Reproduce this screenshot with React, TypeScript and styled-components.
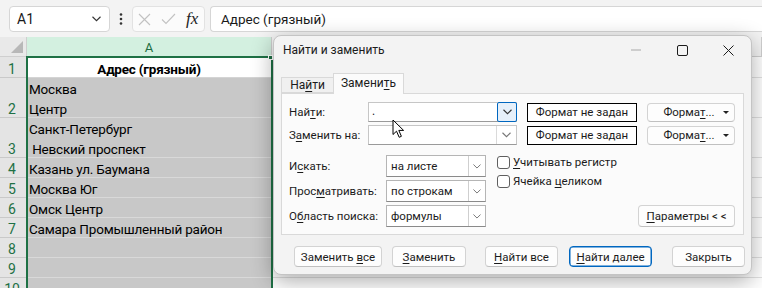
import React from 'react';
import styled, { createGlobalStyle } from 'styled-components';

const Global = createGlobalStyle`
  html, body { margin: 0; padding: 0; background: #fff; overflow: hidden; }
  body { font-family: Roboto, "Noto Sans", sans-serif; }
  * { box-sizing: border-box; }
`;

const UI = `Roboto, "Noto Sans", sans-serif`;
const CELL = `Roboto, "Noto Sans", sans-serif`;

const Page = styled.div`
  position: relative;
  width: 762px;
  height: 288px;
  overflow: hidden;
  background: #fff;
`;

/* ---------- top formula bar ---------- */
const TopBar = styled.div`
  height: 37px;
  background: #f3f3f3;
  display: flex;
  align-items: flex-start;
  padding: 6px 0 0 9px;
`;

const NameBox = styled.div`
  width: 101px;
  height: 26px;
  background: #fff;
  border: 1px solid #d6d6d6;
  border-radius: 4px;
  display: flex;
  align-items: center;
  justify-content: space-between;
  padding: 0 8px 0 7px;
  font: 14px ${UI};
  color: #1a1a1a;
`;

const Dots = styled.div`
  width: 22px;
  height: 26px;
  display: flex;
  align-items: center;
  justify-content: center;
`;

const FxBox = styled.div`
  width: 73px;
  height: 26px;
  background: #fbfbfb;
  border: 1px solid #e2e2e2;
  border-radius: 4px;
  display: flex;
  align-items: center;
  padding: 0 4px 0 5px;
  gap: 10px;
`;

const FxText = styled.span`
  font: italic 17px "Liberation Serif", "DejaVu Serif", serif;
  color: #222;
  line-height: 1;
  margin-top: -2px;
`;

const FormulaInput = styled.div`
  flex: 1;
  height: 26px;
  margin-left: 5px;
  background: #fff;
  border: 1px solid #d6d6d6;
  border-right: none;
  border-radius: 4px 0 0 4px;
  display: flex;
  align-items: center;
  padding-left: 10px;
  font: 13.5px ${UI};
  color: #1a1a1a;
`;

/* ---------- sheet ---------- */
const Sheet = styled.div`
  display: flex;
  flex-direction: column;
`;

const Row = styled.div<{ $h: number }>`
  display: flex;
  height: ${p => p.$h}px;
  flex-shrink: 0;
`;

const Corner = styled.div`
  width: 27px;
  background: #e9e9e9;
  border-right: 1px solid #cfcfcf;
  border-bottom: 1px solid #cfcfcf;
  position: relative;
`;

const CornerTri = styled.div`
  position: absolute;
  right: 3px;
  bottom: 3px;
  width: 0;
  height: 0;
  border-left: 12px solid transparent;
  border-bottom: 12px solid #b8b8b8;
`;

const ColHead = styled.div<{ $active?: boolean }>`
  flex: ${p => (p.$active ? '0 0 245px' : '1')};
  background: ${p => (p.$active ? '#d3f0e0' : '#f3f3f3')};
  color: ${p => (p.$active ? '#1e6e42' : '#444')};
  border-right: 1px solid #cfcfcf;
  border-bottom: 1px solid #cfcfcf;
  display: flex;
  align-items: center;
  justify-content: center;
  padding-top: 2px;
  font: 13px ${UI};
`;

const RowHead = styled.div`
  width: 27px;
  flex: 0 0 27px;
  background: #e4e4e4;
  border-right: 1px solid #c9c9c9;
  border-bottom: 1px solid #c9c9c9;
  color: #1e7145;
  font: 14px ${UI};
  display: flex;
  align-items: flex-end;
  justify-content: center;
  line-height: 19px;
  padding-right: 2px;
`;

const RowNum = styled.span`
  position: relative;
  top: 2px;
`;

const CellA = styled.div<{ $white?: boolean; $bold?: boolean }>`
  flex: 0 0 245px;
  background: ${p => (p.$white ? '#fff' : '#c8c8c8')};
  border-bottom: 1px solid ${p => (p.$white ? '#d4d4d4' : '#d9d9d9')};
  border-right: 1px solid #d9d9d9;
  font: ${p => (p.$bold ? 'bold' : 'normal')} 13.5px ${CELL};
  letter-spacing: -0.2px;
  color: #000;
  line-height: 20px;
  white-space: pre-wrap;
  padding-left: ${p => (p.$bold ? '0' : '2px')};
  text-align: ${p => (p.$bold ? 'center' : 'left')};
  display: flex;
  flex-direction: column;
  justify-content: flex-end;
  overflow: hidden;
`;

const CellText = styled.span`
  position: relative;
  top: 2px;
`;

const CellRest = styled.div`
  flex: 1;
  background: #fff;
  border-bottom: 1px solid #e1e1e1;
`;

const Selection = styled.div`
  position: absolute;
  left: 26px;
  top: 56px;
  width: 247px;
  height: 260px;
  border: 2px solid #1e7145;
  pointer-events: none;
`;

const SelHandle = styled.div`
  position: absolute;
  left: 268px;
  top: 55px;
  width: 5px;
  height: 5px;
  background: #1e7145;
  border: 1px solid #fff;
`;

/* ---------- dialog ---------- */
const Dialog = styled.div`
  position: absolute;
  left: 273px;
  top: 35px;
  width: 479px;
  height: 240px;
  background: #f3f3f3;
  border: 1px solid #c4c4c4;
  border-radius: 8px;
  box-shadow: 0 6px 22px rgba(0, 0, 0, 0.33);
  display: flex;
  flex-direction: column;
  font: 11.5px ${UI};
  color: #1b1b1b;
`;

const TitleBar = styled.div`
  height: 28px;
  display: flex;
  align-items: center;
  padding-left: 9px;
`;

const TitleText = styled.div`
  flex: 1;
  font-size: 12px;
`;

const WinBtn = styled.div`
  width: 46px;
  height: 28px;
  display: flex;
  align-items: center;
  justify-content: center;
`;

const Tabs = styled.div`
  display: flex;
  align-items: flex-end;
  margin: 9px 0 0 7px;
  height: 20px;
`;

const Tab = styled.div<{ $active?: boolean }>`
  height: ${p => (p.$active ? '21px' : '16px')};
  width: ${p => (p.$active ? '71px' : '52px')};
  background: ${p => (p.$active ? '#fbfbfb' : '#f0f0f0')};
  border: 1px solid #d9d9d9;
  border-bottom: ${p => (p.$active ? 'none' : '1px solid #d9d9d9')};
  border-right: ${p => (p.$active ? '1px solid #d9d9d9' : 'none')};
  margin-bottom: ${p => (p.$active ? '-1px' : '0')};
  position: relative;
  z-index: ${p => (p.$active ? 1 : 0)};
  display: flex;
  align-items: center;
  justify-content: center;
  padding-bottom: ${p => (p.$active ? '2px' : '0')};
  font-size: 12px;
`;

const Panel = styled.div`
  margin-left: 7px;
  width: 463px;
  height: 142px;
  background: #fbfbfb;
  border: 1px solid #d9d9d9;
  display: flex;
  flex-direction: column;
  padding: 8px 8px 0 7px;
`;

const FieldRow = styled.div`
  display: flex;
  align-items: center;
  height: 20px;
  & + & { margin-top: 3px; }
`;

const Label = styled.div<{ $w: number }>`
  width: ${p => p.$w}px;
  flex: 0 0 ${p => p.$w}px;
  white-space: nowrap;
`;

const Combo = styled.div`
  width: 149px;
  height: 20px;
  background: #fff;
  border: 1px solid #c6c6c6;
  border-bottom-color: #9a9a9a;
  display: flex;
  align-items: stretch;
`;

const ComboText = styled.div`
  flex: 1;
  padding-left: 3px;
  line-height: 17px;
  font-size: 12px;
`;

const ComboDrop = styled.div<{ $focus?: boolean }>`
  width: 20px;
  margin: ${p => (p.$focus ? '-1px -1px -1px 0' : '0')};
  border: ${p => (p.$focus ? '1px solid #0067c0' : 'none')};
  border-left: 1px solid ${p => (p.$focus ? '#0067c0' : '#dadada')};
  background: ${p => (p.$focus ? '#e6f0fa' : '#fff')};
  border-radius: ${p => (p.$focus ? '2px' : '0')};
  display: flex;
  align-items: center;
  justify-content: center;
`;

const FormatBox = styled.div`
  width: 110px;
  height: 19px;
  margin-left: 10px;
  background: #fff;
  border: 1px solid #000;
  display: flex;
  align-items: center;
  justify-content: center;
  white-space: nowrap;
`;

const Button = styled.div<{ $w: number; $ml?: number; $default?: boolean; $h?: number }>`
  width: ${p => p.$w}px;
  flex: 0 0 ${p => p.$w}px;
  height: ${p => p.$h ?? 21}px;
  margin-left: ${p => p.$ml ?? 0}px;
  background: #fdfdfd;
  border: 1px solid ${p => (p.$default ? '#0067c0' : '#d3d3d3')};
  box-shadow: ${p => (p.$default ? 'inset 0 0 0 0.5px #0067c0' : 'none')};
  border-bottom-color: ${p => (p.$default ? '#0067c0' : '#c0c0c0')};
  border-radius: 4px;
  display: flex;
  align-items: center;
  justify-content: center;
  white-space: nowrap;
  position: relative;
`;

const FmtArrow = styled.div`
  position: absolute;
  right: 5px;
  top: 7px;
  width: 0;
  height: 0;
  border-left: 3px solid transparent;
  border-right: 3px solid transparent;
  border-top: 3px solid #222;
`;

const FmtLabel = styled.span`
  margin-right: 4px;
`;

const Lower = styled.div`
  display: flex;
  margin-top: 10px;
`;

const SelectCol = styled.div`
  display: flex;
  flex-direction: column;
  gap: 3px;
`;

const SelectRow = styled.div`
  display: flex;
  align-items: center;
  height: 22px;
`;

const Select = styled.div`
  width: 100px;
  height: 22px;
  background: #fff;
  border: 1px solid #b5b5b5;
  border-bottom-color: #8a8a8a;
  display: flex;
  align-items: stretch;
`;

const SelectText = styled.div`
  flex: 1;
  padding-left: 4px;
  line-height: 20px;
`;

const SelectDrop = styled.div`
  width: 17px;
  border-left: 1px solid #cfcfcf;
  display: flex;
  align-items: center;
  justify-content: center;
`;

const CheckCol = styled.div`
  margin-left: 11px;
  display: flex;
  flex-direction: column;
  gap: 5px;
`;

const CheckRow = styled.div`
  display: flex;
  align-items: center;
  height: 14px;
  gap: 3px;
`;

const CheckBox = styled.div`
  width: 13px;
  height: 13px;
  border: 1px solid #5f5f5f;
  border-radius: 3px;
  background: #fff;
`;

const ParamsWrap = styled.div`
  margin-left: auto;
  align-self: flex-end;
`;

const Footer = styled.div`
  display: flex;
  margin-top: 11px;
  padding-left: 20px;
`;

const U = styled.span`
  text-decoration: underline;
  text-underline-offset: 2px;
  text-decoration-thickness: 1px;
`;

const Cursor = styled.svg`
  position: absolute;
  left: 392px;
  top: 119px;
`;

const Chevron: React.FC<{ color?: string; w?: number }> = ({ color = '#333', w = 9 }) => (
  <svg width={w} height={Math.ceil(w / 2) + 1} viewBox="0 0 9 5.5">
    <polyline points="0.5,0.5 4.5,4.5 8.5,0.5" fill="none" stroke={color} strokeWidth="1.1" />
  </svg>
);

const rows: { h: number; n: string; text: string; white?: boolean; bold?: boolean }[] = [
  { h: 21, n: '1', text: 'Адрес (грязный)', white: true, bold: true },
  { h: 40, n: '2', text: 'Москва\nЦентр' },
  { h: 40, n: '3', text: 'Санкт-Петербург\n Невский проспект' },
  { h: 20, n: '4', text: 'Казань ул. Баумана' },
  { h: 20, n: '5', text: 'Москва Юг' },
  { h: 20, n: '6', text: 'Омск Центр' },
  { h: 20, n: '7', text: 'Самара Промышленный район' },
  { h: 20, n: '8', text: '' },
  { h: 20, n: '9', text: '' },
  { h: 20, n: '10', text: '' },
];

export default function App() {
  return (
    <Page>
      <Global />
      <TopBar>
        <NameBox>
          <span>A1</span>
          <Chevron color="#333" w={9} />
        </NameBox>
        <Dots>
          <svg width="4" height="14" viewBox="0 0 4 14">
            <circle cx="2" cy="2.5" r="1.3" fill="#333" />
            <circle cx="2" cy="7" r="1.3" fill="#333" />
            <circle cx="2" cy="11.5" r="1.3" fill="#333" />
          </svg>
        </Dots>
        <FxBox>
          <svg width="13" height="13" viewBox="0 0 13 13">
            <path d="M1 1 L12 12 M12 1 L1 12" stroke="#c2c2c2" strokeWidth="1.1" fill="none" />
          </svg>
          <svg width="15" height="12" viewBox="0 0 15 12">
            <polyline points="1,6.5 5,10.5 14,1" stroke="#c2c2c2" strokeWidth="1.1" fill="none" />
          </svg>
          <FxText>fx</FxText>
        </FxBox>
        <FormulaInput>Адрес (грязный)</FormulaInput>
      </TopBar>

      <Sheet>
        <Row $h={20}>
          <Corner>
            <CornerTri />
          </Corner>
          <ColHead $active>A</ColHead>
          <ColHead />
        </Row>
        {rows.map(r => (
          <Row key={r.n} $h={r.h}>
            <RowHead>
              <RowNum>{r.n}</RowNum>
            </RowHead>
            <CellA $white={r.white} $bold={r.bold}>
              <CellText>{r.text}</CellText>
            </CellA>
            <CellRest />
          </Row>
        ))}
      </Sheet>
      <Selection />
      <SelHandle />

      <Dialog>
        <TitleBar>
          <TitleText>Найти и заменить</TitleText>
          <WinBtn>
            <svg width="10" height="2" viewBox="0 0 10 2">
              <line x1="0" y1="1" x2="10" y2="1" stroke="#a8a8a8" strokeWidth="1" />
            </svg>
          </WinBtn>
          <WinBtn>
            <svg width="11" height="11" viewBox="0 0 11 11">
              <rect x="0.5" y="0.5" width="10" height="10" rx="1.5" fill="none" stroke="#1b1b1b" strokeWidth="1" />
            </svg>
          </WinBtn>
          <WinBtn>
            <svg width="11" height="11" viewBox="0 0 11 11">
              <path d="M0.5 0.5 L10.5 10.5 M10.5 0.5 L0.5 10.5" stroke="#1b1b1b" strokeWidth="1" fill="none" />
            </svg>
          </WinBtn>
        </TitleBar>

        <Tabs>
          <Tab>
            <span>
              На<U>й</U>ти
            </span>
          </Tab>
          <Tab $active>
            <span>
              Замени<U>т</U>ь
            </span>
          </Tab>
        </Tabs>

        <Panel>
          <FieldRow>
            <Label $w={79}>
              Най<U>т</U>и:
            </Label>
            <Combo>
              <ComboText>.</ComboText>
              <ComboDrop $focus>
                <Chevron color="#333" w={9} />
              </ComboDrop>
            </Combo>
            <FormatBox>Формат не задан</FormatBox>
            <Button $w={88} $h={19} $ml={10}>
              <FmtLabel>
                Форма<U>т</U>...
              </FmtLabel>
              <FmtArrow />
            </Button>
          </FieldRow>
          <FieldRow>
            <Label $w={79}>
              З<U>а</U>менить на:
            </Label>
            <Combo>
              <ComboText />
              <ComboDrop>
                <Chevron color="#777" w={9} />
              </ComboDrop>
            </Combo>
            <FormatBox>Формат не задан</FormatBox>
            <Button $w={88} $h={19} $ml={10}>
              <FmtLabel>
                Форма<U>т</U>...
              </FmtLabel>
              <FmtArrow />
            </Button>
          </FieldRow>

          <Lower>
            <SelectCol>
              <SelectRow>
                <Label $w={97}>
                  И<U>с</U>кать:
                </Label>
                <Select>
                  <SelectText>на листе</SelectText>
                  <SelectDrop>
                    <Chevron color="#777" w={8} />
                  </SelectDrop>
                </Select>
              </SelectRow>
              <SelectRow>
                <Label $w={97}>
                  Прос<U>м</U>атривать:
                </Label>
                <Select>
                  <SelectText>по строкам</SelectText>
                  <SelectDrop>
                    <Chevron color="#777" w={8} />
                  </SelectDrop>
                </Select>
              </SelectRow>
              <SelectRow>
                <Label $w={97}>
                  О<U>б</U>ласть поиска:
                </Label>
                <Select>
                  <SelectText>формулы</SelectText>
                  <SelectDrop>
                    <Chevron color="#777" w={8} />
                  </SelectDrop>
                </Select>
              </SelectRow>
            </SelectCol>
            <CheckCol>
              <CheckRow>
                <CheckBox />
                <span>
                  <U>У</U>читывать регистр
                </span>
              </CheckRow>
              <CheckRow>
                <CheckBox />
                <span>
                  Ячейка <U>ц</U>еликом
                </span>
              </CheckRow>
            </CheckCol>
            <ParamsWrap>
              <Button $w={97} $h={22}>
                <span>
                  <U>П</U>араметры &lt; &lt;
                </span>
              </Button>
            </ParamsWrap>
          </Lower>
        </Panel>

        <Footer>
          <Button $w={88}>
            <span>
              Заменить <U>в</U>се
            </span>
          </Button>
          <Button $w={74} $ml={10}>
            <span>
              <U>З</U>аменить
            </span>
          </Button>
          <Button $w={73} $ml={19}>
            <span>
              <U>Н</U>айти все
            </span>
          </Button>
          <Button $w={83} $ml={11} $default>
            <span>
              <U>Н</U>айти далее
            </span>
          </Button>
          <Button $w={73} $ml={20}>
            <span>Закрыть</span>
          </Button>
        </Footer>
      </Dialog>

      <Cursor width="13" height="20" viewBox="0 0 13 20">
        <path d="M1 1 L1 15.5 L4.5 12.2 L7.2 18.3 L9.4 17.3 L6.8 11.4 L11.6 11.4 Z" fill="#fff" stroke="#000" strokeWidth="1" strokeLinejoin="round" />
      </Cursor>
    </Page>
  );
}
